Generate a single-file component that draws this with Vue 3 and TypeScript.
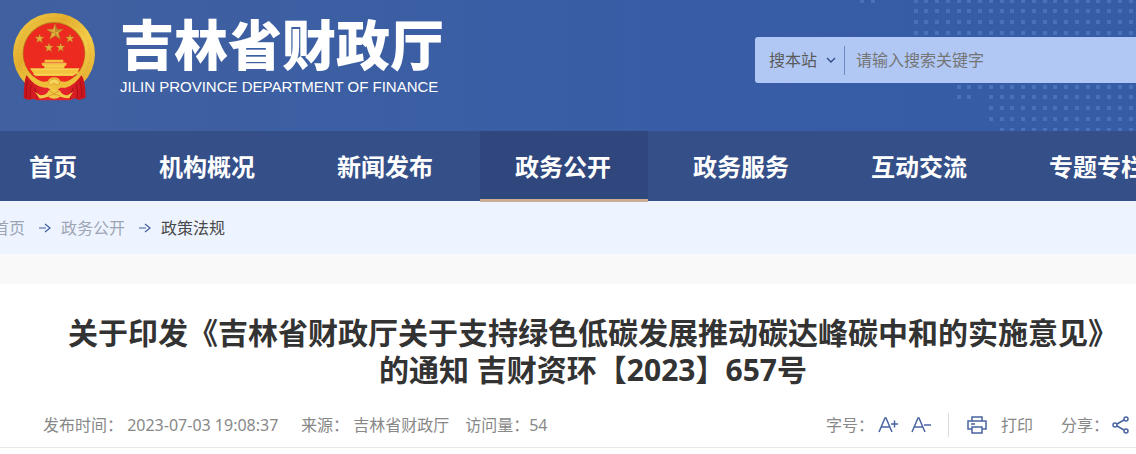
<script setup lang="ts">
import { ref } from 'vue'

interface Dot {
  x: number
  y: number
}

const navItems: string[] = ['首页', '机构概况', '新闻发布', '政务公开', '政务服务', '互动交流', '专题专栏']
const activeItem = '政务公开'
const scope = ref('搜本站')
const keyword = ref('')

// Each entry: row index and the column ranges that are filled with dots.
const dotRows: [number, [number, number][]][] = [
  [0, [[-5, -4], [0, 40]]],
  [1, [[0, 40]]],
  [2, [[0, 40]]],
  [3, [[0, 40]]],
  [8, [[4, 40]]],
  [9, [[4, 5], [7, 40]]],
  [10, [[7, 40]]],
  [11, [[7, 40]]],
  [12, [[8, 40]]],
]

const dots: Dot[] = dotRows.flatMap(([row, ranges]) =>
  ranges.flatMap(([from, to]) =>
    Array.from({ length: to - from + 1 }, (_, n) => ({
      x: Math.floor(914 + ((from + n) * 43) / 4),
      y: Math.floor((row * 43) / 4) - 1,
    })),
  ),
)
</script>

<template>
  <div class="page">
    <header class="banner">
      <svg class="dots" aria-hidden="true">
        <rect v-for="(d, i) in dots" :key="i" :x="d.x" :y="d.y" width="4" height="4" />
      </svg>
      <a class="brand" href="#">
        <svg class="emblem" viewBox="39 39 246 264" role="img" aria-label="国徽">
          <defs>
            <linearGradient id="gold" x1="0" y1="0" x2="1" y2="1">
              <stop offset="0" stop-color="#f3cf4e" />
              <stop offset="0.35" stop-color="#e3ae2d" />
              <stop offset="0.6" stop-color="#f4cd48" />
              <stop offset="1" stop-color="#dca329" />
            </linearGradient>
            <linearGradient id="cloth" x1="0" y1="0" x2="1" y2="0">
              <stop offset="0" stop-color="#c5141b" />
              <stop offset="0.3" stop-color="#e3242a" />
              <stop offset="0.7" stop-color="#e3242a" />
              <stop offset="1" stop-color="#c5141b" />
            </linearGradient>
          </defs>
          <circle cx="162" cy="162" r="123" fill="url(#gold)" />
          <circle cx="162" cy="162" r="108" fill="none" stroke="#d79d2a" stroke-width="2" stroke-dasharray="7 5" opacity="0.6" />
          <circle cx="162" cy="160" r="94" fill="#b8801e" />
          <circle cx="162" cy="161" r="92" fill="#ec2a20" />
          <g fill="#dfae3c" stroke="#b5761c" stroke-width="1">
            <path d="M165 71 171 88 190 88 175 99 181 118 165 107 149 118 155 99 140 88 159 88Z" />
            <path d="M119 102 122 111 132 111 124 118 127 128 119 122 110 127 113 118 105 111 116 111Z" />
            <path d="M210 102 213 111 223 111 215 117 218 127 210 121 201 127 205 118 197 111 207 111Z" />
            <path d="M147 129 150 138 160 138 152 145 155 155 147 149 138 154 141 145 133 138 144 138Z" />
            <path d="M182 129 185 138 195 138 187 144 190 154 182 148 174 155 177 145 169 138 179 138Z" />
          </g>
          <path d="M165 71V98L190 88 171 88ZM165 98 181 118 165 107ZM165 98 140 88 155 99Z" fill="#9c6a20" opacity="0.55" />
          <path d="M134 179H190V187H134ZM124 190H201L197 198H128ZM133 198H193V205H133ZM90 205H239L235 211H94ZM94 211H235V222H102ZM100 222H226L219 228H107Z" fill="#f2c43b" />
          <path d="M128 189H197M132 198H193M92 208H236M100 223H226" stroke="#fae07c" stroke-width="2" />
          <path d="M80 226 Q72 236 71 295 L87 300 L99 296 L112 301 L210 301 L224 295 L237 300 L257 293 Q256 238 244 226 Q232 246 203 258 L181 263 Q162 282 143 263 L120 258 Q96 248 80 226Z" fill="url(#cloth)" />
          <path d="M82 242Q78 270 80 294M94 253Q88 275 91 296M240 242Q247 270 245 292M229 253Q235 275 232 296M220 263Q211 280 211 297M103 263Q112 280 112 297" fill="none" stroke="#a90f17" stroke-width="3" />
          <path d="M102 231Q123 250 143 244Q148 232 162 232Q176 232 182 244Q204 250 224 231L239 228Q227 254 197 263Q183 266 176 254L162 264L148 254Q142 266 128 262Q101 256 86 231Z" fill="#efbf39" />
          <path d="M145 250Q149 236 162 237Q175 236 180 250L170 255L162 249L153 256Z" fill="#f6d45b" stroke="#d49424" stroke-width="2" />
          <path d="M105 276 121 286Q143 284 145 272Q162 262 180 272Q184 284 203 286L219 275 208 295Q194 295 181 290Q163 302 144 290Q128 296 118 295Z" fill="#f2c947" />
          <path d="M147 272 162 281 178 272M145 289Q162 278 181 289" stroke="#d89b28" stroke-width="3" fill="none" />
        </svg>
        <span class="brand-text">
          <span class="brand-name">吉林省财政厅</span>
          <span class="brand-en">JILIN PROVINCE DEPARTMENT OF FINANCE</span>
        </span>
      </a>
      <form class="search" @submit.prevent>
        <span class="scope">
          <select v-model="scope" aria-label="搜索范围">
            <option>搜本站</option>
          </select>
          <svg width="10" height="6" viewBox="0 0 10 6" aria-hidden="true">
            <path d="M1 1 5 5 9 1" fill="none" stroke="#2d4a85" stroke-width="1.3" />
          </svg>
        </span>
        <input v-model="keyword" type="text" aria-label="搜索关键字" placeholder="请输入搜索关键字" />
      </form>
    </header>

    <nav class="nav" aria-label="主导航">
      <a v-for="item in navItems" :key="item" href="#" :class="{ active: item === activeItem }">{{ item }}</a>
    </nav>

    <nav class="crumbs" aria-label="当前位置">
      <a href="#">首页</a>
      <svg width="12" height="10" viewBox="0 0 12 10" aria-hidden="true">
        <path d="M0 5H7" stroke="#8296c6" stroke-width="1.6" />
        <path d="M6 1 11 5 6 9" fill="none" stroke="#405b9b" stroke-width="1.2" />
      </svg>
      <a href="#">政务公开</a>
      <svg width="12" height="10" viewBox="0 0 12 10" aria-hidden="true">
        <path d="M0 5H7" stroke="#8296c6" stroke-width="1.6" />
        <path d="M6 1 11 5 6 9" fill="none" stroke="#405b9b" stroke-width="1.2" />
      </svg>
      <a href="#" class="current" aria-current="page">政策法规</a>
    </nav>

    <main class="article">
      <h1>关于印发《吉林省财政厅关于支持绿色低碳发展推动碳达峰碳中和的实施意见》<br />的通知 吉财资环【2023】657号</h1>
      <div class="meta">
        <div class="facts">
          <span class="published">发布时间： 2023-07-03 19:08:37</span>
          <span>来源： 吉林省财政厅</span>
          <span>访问量：54</span>
        </div>
        <div class="tools">
          <span>字号：</span>
          <button type="button" class="size" aria-label="增大字号">
            <svg width="20" height="16" viewBox="0 0 20 16">
              <path d="M1 15 7 1H8L14 15M3 10H12" />
              <path d="M13 7H20M16.500 3.500V10.500" />
            </svg>
          </button>
          <button type="button" class="size" aria-label="减小字号">
            <svg width="20" height="16" viewBox="0 0 20 16">
              <path d="M1 15 7 1H8L14 15M3 10H12" />
              <path d="M13 8H20" />
            </svg>
          </button>
          <button type="button" class="print">
            <svg width="20" height="18" viewBox="0 0 20 18">
              <path d="M5 5V1H15V5M5 13H1V5H19V13H15M5 11H15V17H5ZM4 8H8" />
            </svg>
            打印
          </button>
          <span>分享：</span>
          <button type="button" class="share" aria-label="分享">
            <svg width="17" height="18" viewBox="0 0 17 18">
              <path d="M5 8 12 4M5 10 12 14" />
              <circle cx="3" cy="9" r="2" />
              <circle cx="14" cy="3" r="2" />
              <circle cx="14" cy="15" r="2" />
            </svg>
          </button>
        </div>
      </div>
    </main>
  </div>
</template>

<style>
body {
  margin: 0;
  background: #fff;
}
</style>

<style scoped>
.page {
  overflow: hidden;
  font-family: "Noto Sans", "Noto Sans CJK SC", sans-serif;
  font-size: 16px;
  line-height: 24px;
  color: #888;
}

a {
  color: inherit;
  text-decoration: none;
}

button,
input,
select {
  margin: 0;
  padding: 0;
  border: 0;
  background: none;
  font: inherit;
  color: inherit;
}

.banner {
  position: relative;
  display: flex;
  justify-content: space-between;
  align-items: flex-start;
  box-sizing: border-box;
  height: 131px;
  background: linear-gradient(90deg, #4060a0, #385da6 60%, #365ca5);
}

.dots {
  position: absolute;
  inset: 0;
  width: 100%;
  height: 100%;
  fill: #4a70ba;
}

.brand {
  position: relative;
  display: flex;
  gap: 25px;
  padding: 13px 0 0 13px;
  color: #fff;
}

.emblem {
  width: 82px;
  height: 88px;
}

.brand-text {
  display: flex;
  flex-direction: column;
}

.brand-name {
  height: 64px;
  font: 900 54px/60px "Noto Sans CJK SC", sans-serif;
}

.brand-en {
  font: 15px/20px "Liberation Sans", Arial, sans-serif;
}

.search {
  position: relative;
  display: flex;
  align-items: center;
  flex: 0 0 381px;
  height: 46px;
  margin-top: 37px;
  border-radius: 3px 0 0 3px;
  background: #b1c8f5;
}

.scope {
  display: flex;
  align-items: center;
  gap: 8px;
  box-sizing: border-box;
  width: 90px;
  height: 29px;
  padding-left: 14px;
  border-right: 1px solid #6d89c6;
  color: #5a5a5a;
}

.scope select {
  width: 49px;
  appearance: none;
}

.search input {
  flex: 1;
  min-width: 0;
  padding-left: 11px;
  outline: 0;
}

.search input::placeholder {
  color: #757575;
  opacity: 1;
}

.nav {
  display: flex;
  gap: 10px;
  height: 70px;
  background: #354f89;
  color: #fff;
  font-size: 24px;
  font-weight: bold;
  line-height: 72px;
}

.nav a {
  flex: none;
  height: 68px;
  padding: 0 37px 0 35px;
}

.nav a:first-child {
  padding-left: 29px;
}

.nav .active {
  position: relative;
  background: #2f477c;
  border-bottom: 3px solid #cbae94;
}

.crumbs {
  display: flex;
  align-items: center;
  height: 53px;
  margin-left: -7px;
  background: #edf4ff;
  color: #9da5b5;
}

.crumbs svg {
  margin: 0 10px 0 14px;
}

.crumbs .current {
  color: #4a4a4a;
}

.article {
  border-top: 30px solid #f9f9f9;
  background: #fff;
}

h1 {
  margin: 0;
  padding: 30px 0 0 50px;
  color: #333;
  font-size: 30px;
  line-height: 37px;
  text-align: center;
  white-space: nowrap;
}

.meta {
  display: flex;
  justify-content: space-between;
  align-items: center;
  height: 45px;
  margin-top: 14px;
  padding: 0 7px 0 43px;
  border-bottom: 1px solid #e8e8e8;
  white-space: nowrap;
}

.facts {
  display: flex;
  gap: 16px;
}

.published {
  min-width: 242px;
}

.tools {
  display: flex;
  align-items: center;
}

.tools svg {
  display: block;
  fill: none;
  stroke: #4a64a1;
  stroke-width: 1.5;
}

.size {
  margin-left: 4px;
}

.size + .size {
  margin-left: 13px;
}

.print {
  display: flex;
  align-items: center;
  gap: 14px;
  margin: 0 28px 0 17px;
  padding-left: 18px;
  border-left: 1px solid #ddd;
}

.share {
  margin-left: 3px;
}
</style>
